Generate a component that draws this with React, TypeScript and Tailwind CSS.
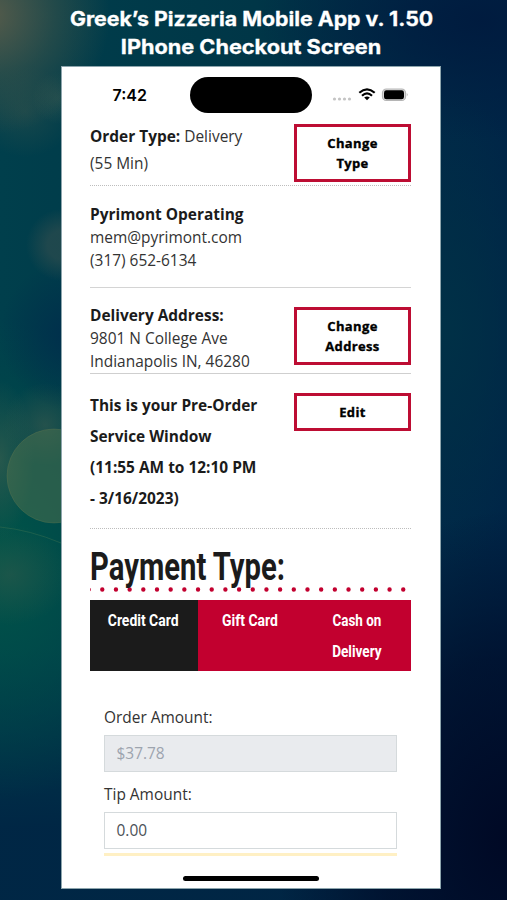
import React from "react";

const bokeh = {
  background: [
    "radial-gradient(ellipse 120px 120px at -10px 15px, rgba(100,96,74,.85), rgba(85,92,72,.4) 55%, rgba(70,90,72,0))",
    "radial-gradient(circle 26px at 58px 98px, rgba(85,105,85,.3), rgba(85,105,85,0))",
    "radial-gradient(ellipse 50px 45px at 25px 112px, rgba(60,86,75,.4), rgba(60,86,75,0))",
    "radial-gradient(circle 36px at 62px 245px, rgba(44,76,78,.7) 40%, rgba(44,76,78,0))",
    "radial-gradient(ellipse 70px 75px at 70px 335px, rgba(0,46,76,.95), rgba(0,46,76,0))",
    "radial-gradient(circle 42px at 45px 425px, rgba(60,90,78,.6), rgba(60,90,78,0))",
    "radial-gradient(ellipse 35px 80px at 0px 460px, rgba(60,95,78,.65), rgba(60,95,78,0))",
    "radial-gradient(ellipse 60px 50px at 10px 575px, rgba(45,88,75,.6), rgba(45,88,75,0))",
    "radial-gradient(ellipse 190px 240px at 0px 560px, rgba(0,86,72,.95), rgba(0,82,72,.5) 50%, rgba(0,76,72,0))",
    "radial-gradient(ellipse 230px 330px at 507px 840px, rgba(0,8,36,.97), rgba(0,8,36,.6) 55%, rgba(0,8,36,0))",
    "radial-gradient(ellipse 110px 240px at 445px 330px, rgba(0,50,70,.85), rgba(0,50,70,0))",
    "radial-gradient(ellipse 220px 120px at 480px 20px, rgba(0,26,62,.9), rgba(0,26,62,0))",
    "linear-gradient(180deg, rgba(0,36,68,0) 72%, rgba(0,36,68,.9) 92%)",
    "linear-gradient(90deg, #003f4c 0%, #003647 50%, #002a48 82%, #002547 100%)",
  ].join(","),
};

function Fit({ children, className = "" }: { children: React.ReactNode; className?: string }) {
  return <span className={"inline-block whitespace-nowrap " + className}>{children}</span>;
}

function OutlineButton({ lines, className = "" }: { lines: string[]; className?: string }) {
  return (
    <button className={"flex w-[117px] shrink-0 flex-col items-center justify-center border-[3px] border-[#bd0d33] bg-white pb-[1px] pl-[1px] text-[13px] leading-[20px] font-bold tracking-[0.35px] text-black " + className}>
      {lines.map((l) => <span key={l} className="[-webkit-text-stroke:0.35px_black]">{l}</span>)}
    </button>
  );
}

export default function App() {
  return (
    <div className="relative h-[900px] w-[507px] overflow-hidden" style={bokeh}>
      <svg className="absolute inset-0" width="507" height="900">
        <circle cx="54" cy="476" r="47" fill="#48704f" fillOpacity=".55" stroke="#6a7a50" strokeOpacity=".3" />
        <path d="M0 527 Q30 530 61 543" stroke="#4d7a52" strokeOpacity=".35" fill="none" />
      </svg>
      <div className="relative flex flex-col items-center">
        <h1 className="flex h-[66px] flex-col items-center pt-[5px] pr-[4px] font-[Inter,sans-serif] text-[20px] leading-[28px] font-bold text-white">
          <Fit className="scale-x-[1.065] [-webkit-text-stroke:0.3px_white]">Greek’s Pizzeria Mobile App v. 1.50</Fit>
          <Fit className="scale-x-[1.085] [-webkit-text-stroke:0.3px_white]">IPhone Checkout Screen</Fit>
        </h1>
        <main className="flex h-[823px] w-[380px] -translate-x-[3px] flex-col border border-[#8da5ad] bg-white font-['Open_Sans',sans-serif] text-[15.45px] text-[#1b1b1b]">
          <div className="flex h-[56px] items-center pl-[51px]">
            <span className="w-[77px] font-[Inter,sans-serif] text-[16px] font-semibold text-black">7:42</span>
            <div className="h-[36px] w-[122px] rounded-full bg-black" />
            <svg className="ml-[19px]" width="80" height="20" viewBox="0 0 80 20">
              <g fill="#c4c4c4">
                <circle cx="3.5" cy="14" r="1.6" /><circle cx="8.5" cy="14" r="1.6" /><circle cx="13.5" cy="14" r="1.6" /><circle cx="18.5" cy="14" r="1.6" />
              </g>
              <g fill="none" stroke="#000" strokeWidth="2.2">
                <path d="M28.3 7.8 Q36 1 43.7 7.8" />
                <path d="M31 10.7 Q36 6.2 41 10.7" />
              </g>
              <path d="M33.2 12.6 Q36 10.2 38.8 12.6 L36 15.3 Z" />
              <rect x="51.5" y="4" width="23" height="11.5" rx="3.8" fill="#ddd" stroke="#b5b5b5" strokeWidth="1.2" />
              <rect x="53" y="5.3" width="20" height="9" rx="2.4" />
              <path d="M75.8 7.8 q1.8 1.9 0 3.8z" fill="#aaa" />
            </svg>
          </div>
          <div className="ml-[28px] flex w-[321px] flex-col self-start">
            <section className="flex h-[63px] justify-between border-b border-dotted border-[#bdbdbd]">
              <p className="pl-[.5px] leading-[27px]"><b>Order Type:</b> <span className="text-[#333]">Delivery<br />(55 Min)</span></p>
              <OutlineButton className="mt-[1px] h-[58px]" lines={["Change", "Type"]} />
            </section>
            <section className="h-[102px] border-b border-[#d4d4d4] pt-[17px] pl-[.5px] leading-[23px] text-[#333]">
              <b className="text-[#1b1b1b]">Pyrimont Operating</b><br />mem@pyrimont.com<br />(317) 652-6134
            </section>
            <section className="flex h-[86px] justify-between border-b border-[#cfcfcf]">
              <p className="pt-[16px] pl-[.5px] leading-[23.2px] text-[#333]"><b className="text-[#1b1b1b]">Delivery Address:</b><br />9801 N College Ave<br />Indianapolis IN, 46280</p>
              <OutlineButton className="mt-[19px] h-[58px]" lines={["Change", "Address"]} />
            </section>
            <section className="flex h-[155px] justify-between border-b border-dotted border-[#bdbdbd]">
              <p className="pt-[16px] pl-[.5px] leading-[31px] font-bold">This is your Pre-Order<br />Service Window<br />(11:55 AM to 12:10 PM<br />- 3/16/2023)</p>
              <OutlineButton className="mt-[19px] h-[38px]" lines={["Edit"]} />
            </section>
            <h2 className="h-[58px] pt-[14px] font-[Roboto,sans-serif] text-[38px] leading-[48px] font-bold">
              <Fit className="origin-left scale-x-[0.77]">Payment Type:</Fit>
            </h2>
            <svg className="h-[13px] w-[321px]" viewBox="0 0 321 13">
              <path d="M-1.4 2.5H318" stroke="#c2002f" strokeWidth="4.4" strokeLinecap="round" strokeDasharray="0 13.68" />
            </svg>
            <nav className="grid h-[71px] grid-cols-[108px_106px_107px] bg-[#c2002f] text-center font-[Roboto,sans-serif] text-[17px] leading-[31px] font-bold text-white">
              <div className="bg-[#1b1b1b] pt-[5px]"><Fit className="scale-x-[0.82]">Credit Card</Fit></div>
              <div className="pt-[5px]"><Fit className="scale-x-[0.82]">Gift Card</Fit></div>
              <div className="pt-[5px]"><Fit className="scale-x-[0.79]">Cash on</Fit><br /><Fit className="scale-x-[0.8]">Delivery</Fit></div>
            </nav>
            <form className="flex w-[293px] flex-col self-center pt-[33px] text-[#333]">
              <label className="pl-[.5px] leading-[26px]">Order Amount:</label>
              <div className="mt-[5px] flex h-[37px] items-center border border-[#d5dadc] bg-[#e9ebee] pl-[12px] text-[#9da4ae]">$37.78</div>
              <label className="mt-[9px] pl-[.5px] leading-[26px]">Tip Amount:</label>
              <div className="mt-[5px] flex h-[37px] items-center border border-[#d5dadc] pl-[12px] text-[#4b5157]">0.00</div>
              <div className="mt-[4px] h-[3px] bg-[#fff0c4]" />
            </form>
          </div>
          <div className="mt-[20px] ml-[121px] h-[5px] w-[136px] rounded-full bg-black" />
        </main>
      </div>
    </div>
  );
}
